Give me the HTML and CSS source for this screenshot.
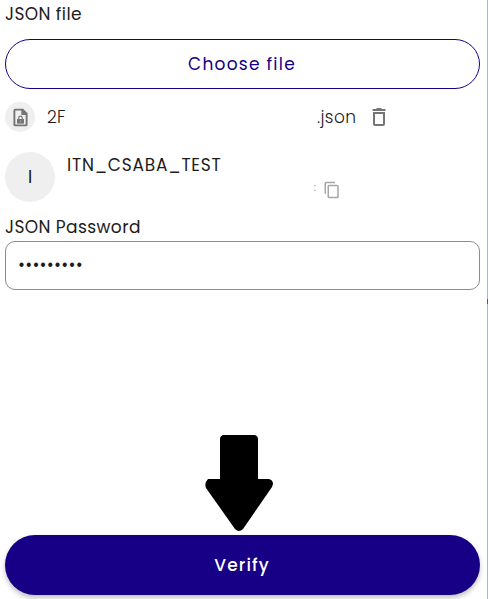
FILE: index.html
```html
<!DOCTYPE html>
<html lang="en">
<head>
<meta charset="utf-8">
<title>JSON file verification</title>
<link rel="stylesheet" href="styles.css">
</head>
<body>
<main class="panel">
  <div class="label label-file"><span>JSON file</span></div>
  <button class="choose"><span>Choose file</span></button>
  <div class="file-row">
    <span class="file-badge">
      <svg width="21" height="21" viewBox="0 0 24 24" fill="none" stroke="#757575" stroke-width="2.2"><path d="M14.5 3H6Q5 3 5 4V20Q5 21 6 21H18Q19 21 19 20V7.5Z"/><path d="M14 3V8H19" fill="#757575"/><path d="M10 14V12.5a2 2 0 0 1 4 0V14" stroke-width="1.3"/><path d="M8 13.7H16V19H8Z" fill="#757575" stroke="none"/><circle cx="12" cy="16.2" r="0.7" fill="#bbb" stroke="none"/></svg>
    </span>
    <span class="file-name">2F</span>
    <span class="file-ext">.json</span>
    <svg class="trash" width="24" height="24" viewBox="0 0 24 24" fill="#757575"><path fill-rule="evenodd" d="M5.5 4H9L10 3H14L15 4H18.5V6H5.5ZM6 7H18V19a2 2 0 0 1-2 2H8a2 2 0 0 1-2-2ZM8 9V19H16V9Z"/></svg>
  </div>
  <div class="account">
    <span class="avatar">I</span>
    <div class="account-info">
      <div class="account-name">ITN_CSABA_TEST</div>
      <div class="account-id"><span class="colon">:</span><svg width="18" height="18" viewBox="0 0 24 24" fill="#a6a6a6"><path fill-rule="evenodd" d="M16 1H4a2 2 0 0 0-2 2V17H4V3H16ZM19 5H8a2 2 0 0 0-2 2V21a2 2 0 0 0 2 2H19a2 2 0 0 0 2-2V7a2 2 0 0 0-2-2ZM8 7H19V21H8Z"/></svg></div>
    </div>
  </div>
  <div class="label label-password"><span>JSON Password</span></div>
  <div class="password">•••••••••</div>
  <div class="pointer">
    <svg width="68" height="97" viewBox="0 0 68 97"><path d="M18 0H50Q53 1 53 4V44H64Q68 45 68 49L67 52L38 94Q34 98 30 94L1 53Q-1 48 3 44H15V4Q15 1 18 0Z"/></svg>
  </div>
  <button class="verify"><span>Verify</span></button>
</main>
<aside class="edge"><i></i></aside>
</body>
</html>
```
FILE: styles.css
```css
* { box-sizing: border-box; }
body {
  margin: 0;
  display: flex;
  width: 488px;
  height: 599px;
  overflow: hidden;
  background: #fff;
  color: #1d1b1b;
  font-family: Poppins, Inter, sans-serif;
  font-size: 17px;
}
.panel {
  display: flex;
  flex-direction: column;
  width: 487px;
  height: 599px;
  padding: 0 7px 4px 5px;
}
.label { line-height: 24px; white-space: nowrap; }
.label-file { height: 37px; padding-top: 2px; letter-spacing: 0.4px; }
button { font: inherit; padding: 0; }
.choose {
  height: 50px;
  margin-top: 2px;
  border: 1px solid #170085;
  border-radius: 25px;
  background: #fff;
  color: #170085;
  letter-spacing: 1.25px;
}
.choose span { margin-right: 1px; }
.file-row { display: flex; align-items: center; height: 30px; margin-top: 13px; font-weight: 300; }
.file-badge {
  display: flex;
  align-items: center;
  justify-content: center;
  width: 30px;
  height: 30px;
  border-radius: 50%;
  background: #efefef;
}
.file-name { width: 270px; margin-left: 12px; letter-spacing: 0.4px; }
.file-ext { width: 50px; letter-spacing: 0.4px; }
.account { display: flex; height: 50px; margin-top: 20px; }
.avatar {
  width: 50px;
  border-radius: 50%;
  background: #efefef;
  color: #111;
  line-height: 50px;
  text-align: center;
}
.account-info { margin-left: 12px; }
.account-name { height: 28px; line-height: 27px; letter-spacing: 0.77px; }
.account-id { display: flex; align-items: center; width: 274px; height: 20px; justify-content: flex-end; }
.colon { margin-right: 7px; color: #8194ac; font-size: 10px; line-height: 12px; padding-bottom: 4px; }
.label-password { height: 26px; margin-top: 13px; letter-spacing: 0.4px; }
.password {
  height: 49px;
  border: 1px solid #8c8c8c;
  border-radius: 10px;
  padding-left: 12px;
  line-height: 47px;
  letter-spacing: 0.2px;
}
.pointer { margin-top: auto; height: 100px; padding-left: 200px; }
.pointer svg { display: block; }
.verify {
  height: 60px;
  flex: none;
  border: 0;
  border-radius: 30px;
  background: #170085;
  color: #fff;
  font-weight: 500;
  letter-spacing: 1.1px;
  box-shadow: 0 3px 5px rgba(0, 0, 0, 0.24);
}
.verify span { margin-right: 1px; }
.edge { width: 1px; height: 599px; background: #b0b7c3; }
.edge i { display: block; height: 5px; margin-top: 299px; background: #55565a; }
```
